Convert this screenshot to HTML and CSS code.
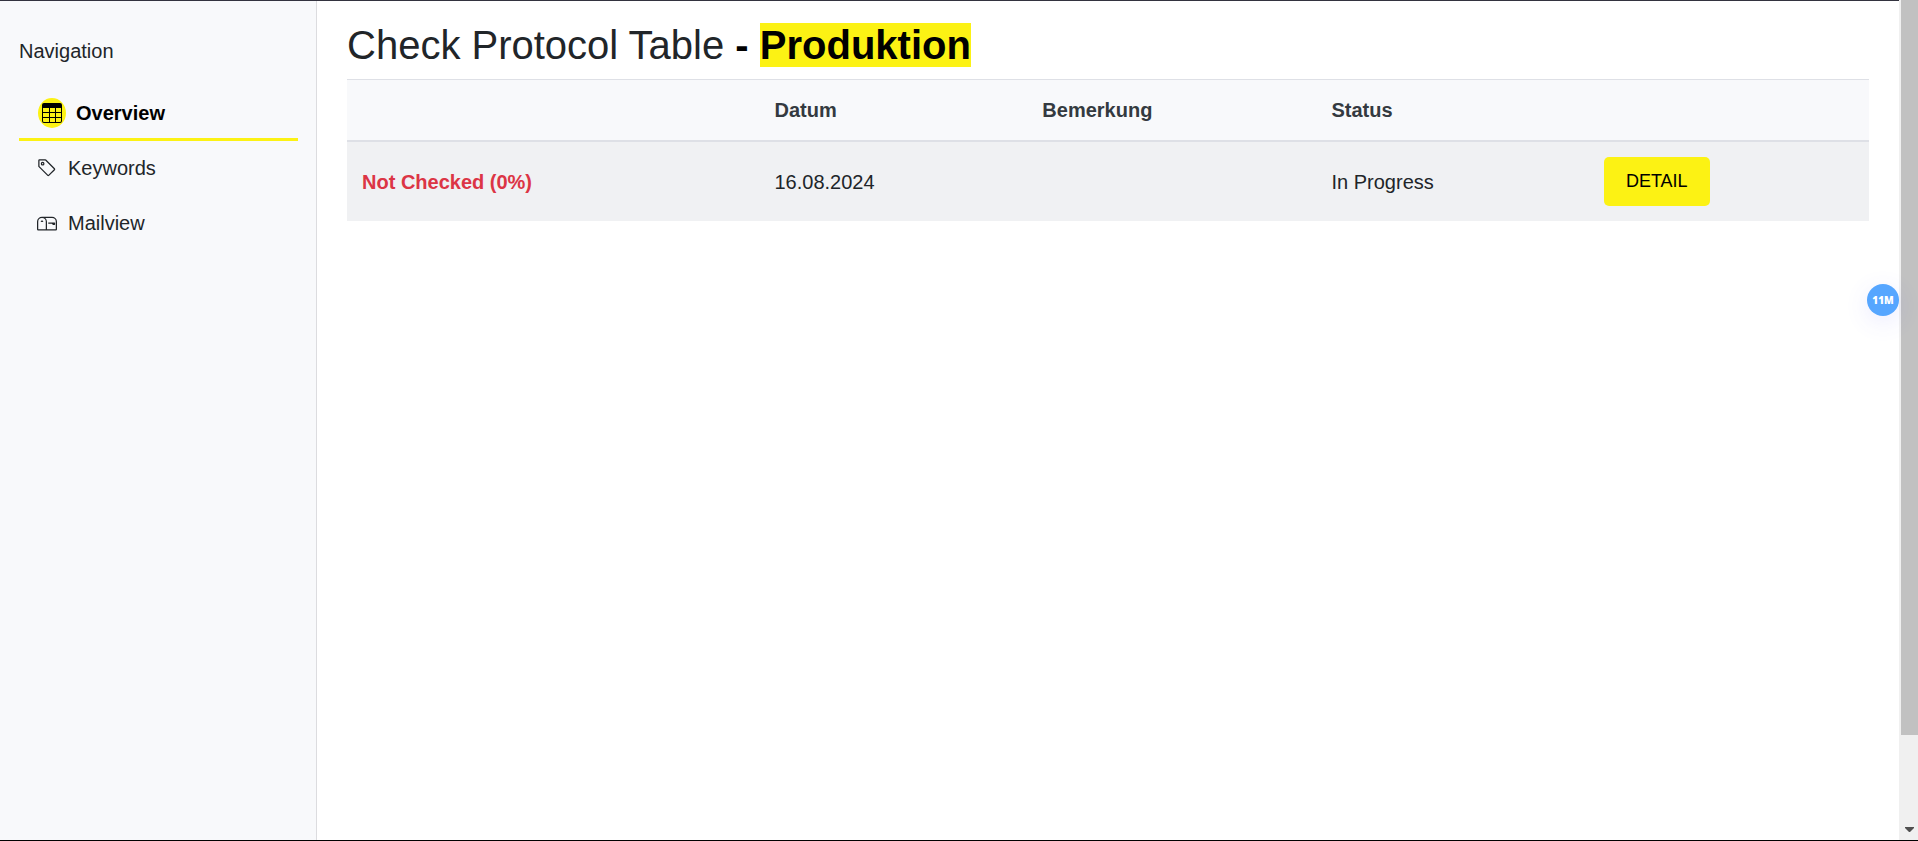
FILE: index.html
```
<!DOCTYPE html>
<html lang="en">
<head>
<meta charset="utf-8">
<title>Check Protocol Table</title>
<link rel="stylesheet" href="styles.css">
</head>
<body>
<div class="app">
  <div class="view">
    <aside class="sidebar">
      <p class="sidebar-title">Navigation</p>
      <nav class="nav">
        <a class="nav-link active" href="#overview">
          <span class="badge">
            <svg class="icon" viewBox="0 0 20 20" aria-hidden="true"><path d="M2 0h16a2 2 0 0 1 2 2v16a2 2 0 0 1-2 2H2a2 2 0 0 1-2-2V2a2 2 0 0 1 2-2zM1 5v4h6V5zM8 5v4h5V5zM14 5v4h5V5zM1 10v4h6v-4zM8 10v4h5v-4zM14 10v4h5v-4zM1 15v3a1 1 0 0 0 1 1h5v-4zM8 15v4h5v-4zM14 15v4h4a1 1 0 0 0 1-1v-3z" fill-rule="evenodd"/></svg>
          </span>
          Overview
        </a>
        <a class="nav-link" href="#keywords">
          <svg class="icon" viewBox="0 0 16 16" aria-hidden="true"><path d="M6 4.5a1.5 1.5 0 1 1-3 0 1.5 1.5 0 0 1 3 0zm-1 0a.5.5 0 1 0-1 0 .5.5 0 0 0 1 0z"/><path d="M2 1h4.586a1 1 0 0 1 .707.293l7 7a1 1 0 0 1 0 1.414l-4.586 4.586a1 1 0 0 1-1.414 0l-7-7A1 1 0 0 1 1 6.586V2a1 1 0 0 1 1-1zm0 5.586 7 7L13.586 9l-7-7H2v4.586z"/></svg>
          Keywords
        </a>
        <a class="nav-link" href="#mailview">
          <svg class="icon" viewBox="0 0 16 16" aria-hidden="true"><path d="M4 4a3 3 0 0 0-3 3v6h6V7a3 3 0 0 0-3-3zm0-1h8a4 4 0 0 1 4 4v6a1 1 0 0 1-1 1H1a1 1 0 0 1-1-1V7a4 4 0 0 1 4-4zm2.646 1A3.99 3.99 0 0 1 8 7v6h7V7a3 3 0 0 0-3-3H6.646z"/><path d="M11.793 8.5H9v-1h5a.5.5 0 0 1 .5.5v1a.5.5 0 0 1-.5.5h-1a.5.5 0 0 1-.354-.146l-.853-.854zM5 7c0 .552-.448 0-1 0s-1 .552-1 0a1 1 0 0 1 2 0z"/></svg>
          Mailview
        </a>
      </nav>
    </aside>
    <main class="content">
      <h1 class="title">Check Protocol Table <strong>- <mark class="mark">Produktion</mark></strong></h1>
      <table class="table">
        <colgroup>
          <col class="col-check"><col class="col-date"><col class="col-note"><col class="col-status"><col>
        </colgroup>
        <thead>
          <tr><th></th><th scope="col">Datum</th><th scope="col">Bemerkung</th><th scope="col">Status</th><th></th></tr>
        </thead>
        <tbody>
          <tr>
            <td class="unchecked">Not Checked (0%)</td>
            <td>16.08.2024</td>
            <td></td>
            <td>In Progress</td>
            <td><button class="btn" type="button">DETAIL</button></td>
          </tr>
        </tbody>
      </table>
    </main>
    <button class="bubble" type="button">11M</button>
  </div>
  <div class="scrollbar" aria-hidden="true">
    <div class="thumb"></div>
    <svg class="arrow" viewBox="0 0 9 5"><path d="M0 0h9v1L5 5H4L0 1z"/></svg>
  </div>
</div>
</body>
</html>
```
FILE: styles.css
```
* { box-sizing: border-box; }

body {
  margin: 0;
  background: #fff;
  color: #212529;
  font: 20px/30px "Liberation Sans", Arial, sans-serif;
}

.app {
  display: flex;
  height: 100vh;
  border-bottom: 1px solid #000;
}

.view {
  position: relative;
  display: flex;
  flex: 1;
  border-top: 1px solid #33333f;
}

.sidebar {
  flex: none;
  width: 317px;
  padding: 35px 18px 0 19px;
  background: #f8f9fb;
  border-right: 1px solid #dcdcdf;
}

.sidebar-title { margin: 0 0 20px; }

.nav { display: flex; flex-direction: column; }

.nav-link {
  display: flex;
  align-items: center;
  gap: 11px;
  height: 55px;
  padding: 0 0 2px 18px;
  color: #212529;
  text-decoration: none;
}

.nav-link.active {
  gap: 10px;
  padding: 2px 0 0 19px;
  border-bottom: 3px solid #fcf214;
  color: #000;
  font-weight: bold;
}

.badge {
  display: flex;
  align-items: center;
  justify-content: center;
  width: 28px;
  height: 30px;
  border-radius: 50%;
  background: #fcf214;
}

.icon { width: 20px; height: 20px; fill: currentColor; }

.content { flex: 1; padding: 20px 30px; }

.title {
  margin: 0 0 10px;
  font-size: 40px;
  font-weight: normal;
  line-height: 48px;
}

.title strong { color: #000; }

.mark { background: #fcf214; color: #000; }

.table {
  width: 100%;
  border-spacing: 0;
  table-layout: fixed;
}

.col-check { width: 27.1%; }
.col-date { width: 17.6%; }
.col-note { width: 19%; }
.col-status { width: 17.9%; }

.table th, .table td { padding: 15px; text-align: left; }

.table th {
  height: 63px;
  border-top: 1px solid #dee0e6;
  border-bottom: 2px solid #dee0e6;
  background: #f8f9fb;
  color: #343a40;
}

.table td { background: #f0f1f3; }

.table .unchecked { color: #dc3545; font-weight: bold; }

.btn {
  display: block;
  height: 49px;
  padding: 0 22px;
  border: 0;
  border-radius: 5px;
  background: #fcf214;
  color: #000;
  font: 18px/27px "Liberation Sans", Arial, sans-serif;
}

.bubble {
  position: absolute;
  top: 283px;
  right: 0;
  width: 32px;
  height: 32px;
  padding: 0;
  border: 0;
  border-radius: 50%;
  background: #56a6ff;
  box-shadow: 0 6px 24px #5050ff1f;
  color: #fff;
  font: 800 10px/32px "Open Sans", sans-serif;
}

.scrollbar {
  display: flex;
  flex-direction: column;
  justify-content: space-between;
  width: 19px;
  padding: 0 0 8px 2px;
  background: #f0f0f0;
}

.thumb { height: 88.3%; background: #c1c1c1; }

.arrow { width: 9px; height: 5px; margin-left: 4px; fill: #505050; }
```
